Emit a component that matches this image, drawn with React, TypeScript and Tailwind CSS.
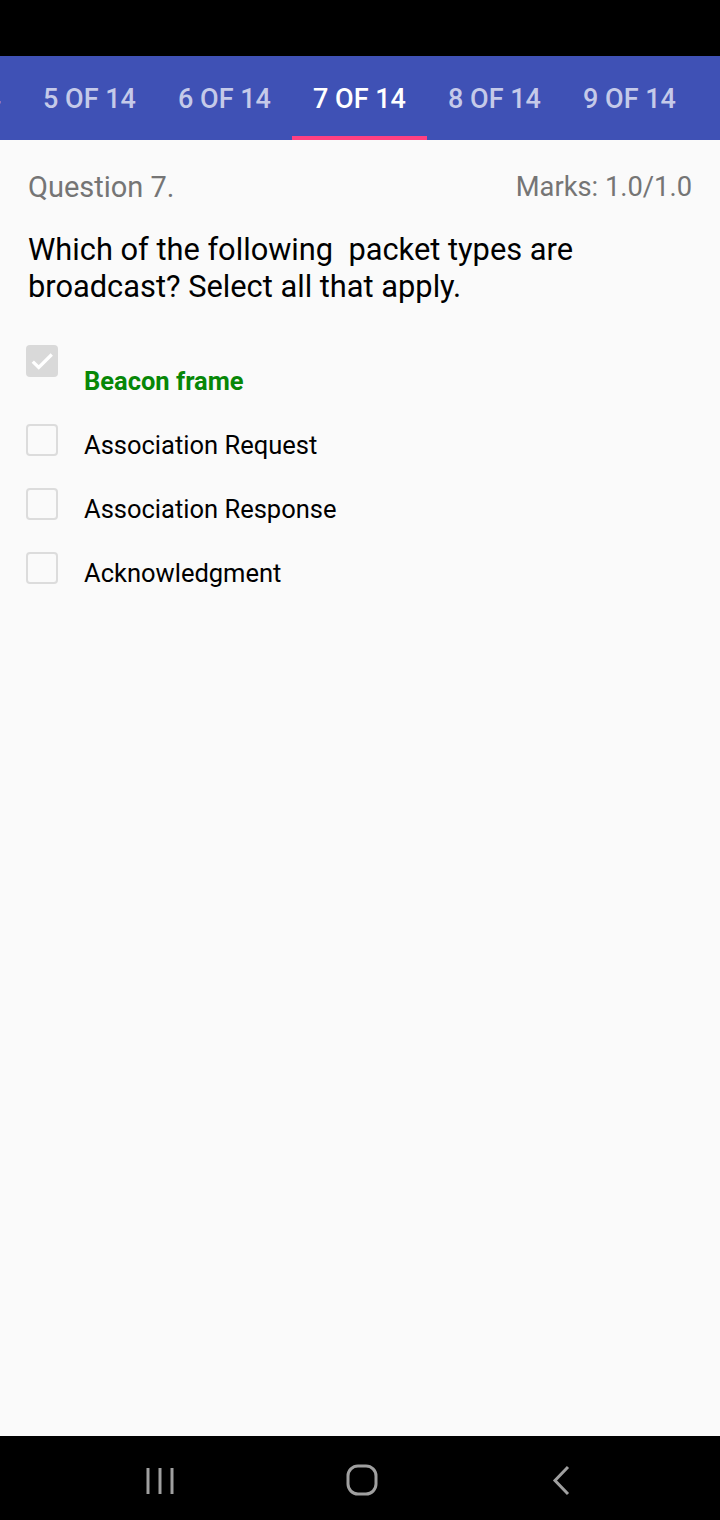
import React from "react";

// One tab in the question pager strip
const Tab = ({ label, active }: { label: string; active?: boolean }) => (
    <div className="relative flex h-full w-[135px] shrink-0 items-center justify-center pt-[2px]">
        <span
            className={
                active
                    ? "text-[27px] font-medium text-white"
                    : "text-[27px] font-medium text-[#c5cae9]"
            }
        >
            {label}
        </span>
        {active && <div className="absolute bottom-0 left-0 h-[4px] w-full bg-[#ff4081]" />}
    </div>
);

// Checkbox square, either checked (grey fill) or empty outline
const Box = ({ checked }: { checked?: boolean }) =>
    checked ? (
        <div className="flex h-[32px] w-[32px] shrink-0 items-center justify-center rounded-[4px] bg-[#d9d9d9]">
            <svg width="26" height="26" viewBox="0 0 24 24" fill="none">
                <path d="M3.5 12.5l5.5 5.5L21 6" stroke="#ffffff" strokeWidth="3" />
            </svg>
        </div>
    ) : (
        <div className="h-[32px] w-[32px] shrink-0 rounded-[4px] border-2 border-[#dcdcdc]" />
    );

const options = [
    { text: "Association Request" },
    { text: "Association Response" },
    { text: "Acknowledgment" },
];

export default function App() {
    return (
        <div
            className="flex h-[1520px] w-[720px] flex-col overflow-hidden bg-[#fafafa]"
            style={{ fontFamily: "Roboto, 'Noto Sans', sans-serif" }}
        >
            {/* Status bar */}
            <div className="h-[56px] shrink-0 bg-black" />

            {/* Tab strip, scrolled so that tab 4 is nearly out of view */}
            <div className="flex h-[84px] shrink-0 overflow-hidden bg-[#3f51b5]">
                <div className="-ml-[113px] flex h-full">
                    <Tab label="4 OF 14" />
                    <Tab label="5 OF 14" />
                    <Tab label="6 OF 14" />
                    <Tab label="7 OF 14" active />
                    <Tab label="8 OF 14" />
                    <Tab label="9 OF 14" />
                </div>
            </div>

            {/* Question body */}
            <div className="flex-1 px-[28px] pt-[30px]">
                <div className="flex items-center justify-between leading-[34px]">
                    <span className="text-[29px] text-[#757575]">Question 7.</span>
                    <span className="text-[27.3px] text-[#757575]">Marks: 1.0/1.0</span>
                </div>

                <p className="mt-[27px] whitespace-pre-wrap text-[30.8px] leading-[37px] text-black">
                    {"Which of the following  packet types are\nbroadcast? Select all that apply."}
                </p>

                <div className="-ml-[2px] mt-[40px] flex flex-col">
                    <div className="flex h-[79px] items-start gap-[26px]">
                        <Box checked />
                        <span className="pt-[21px] text-[25.5px] font-bold leading-[30px] text-[#078707]">
                            Beacon frame
                        </span>
                    </div>
                    {options.map((o) => (
                        <div key={o.text} className="flex h-[64px] items-start gap-[26px]">
                            <Box />
                            <span className="pt-[6px] text-[25.5px] leading-[30px] text-black">{o.text}</span>
                        </div>
                    ))}
                </div>
            </div>

            {/* Navigation bar */}
            <div className="flex h-[84px] shrink-0 items-center bg-black pt-[6px]">
                <div className="flex w-full items-center justify-between pl-[146px] pr-[148px]">
                    <svg width="28" height="30" viewBox="0 0 28 30" fill="none">
                        <path d="M2 2v26M14 2v26M26 2v26" stroke="#a0a0a0" strokeWidth="3" />
                    </svg>
                    <svg width="34" height="34" viewBox="0 0 34 34" fill="none">
                        <rect x="2" y="2" width="28" height="28" rx="10" stroke="#a0a0a0" strokeWidth="3" />
                    </svg>
                    <svg width="20" height="32" viewBox="0 0 20 32" fill="none">
                        <path d="M16 2L3 15.5L16 29" stroke="#a0a0a0" strokeWidth="3" />
                    </svg>
                </div>
            </div>
        </div>
    );
}
